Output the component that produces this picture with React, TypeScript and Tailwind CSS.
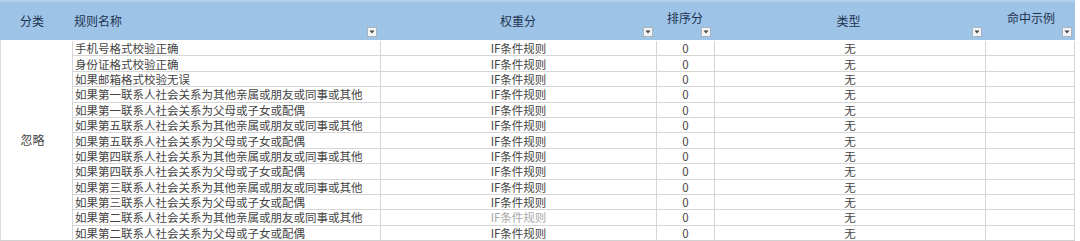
import React from "react";

const rows: { name: string; faded?: boolean }[] = [
  { name: "手机号格式校验正确" },
  { name: "身份证格式校验正确" },
  { name: "如果邮箱格式校验无误" },
  { name: "如果第一联系人社会关系为其他亲属或朋友或同事或其他" },
  { name: "如果第一联系人社会关系为父母或子女或配偶" },
  { name: "如果第五联系人社会关系为其他亲属或朋友或同事或其他" },
  { name: "如果第五联系人社会关系为父母或子女或配偶" },
  { name: "如果第四联系人社会关系为其他亲属或朋友或同事或其他" },
  { name: "如果第四联系人社会关系为父母或子女或配偶" },
  { name: "如果第三联系人社会关系为其他亲属或朋友或同事或其他" },
  { name: "如果第三联系人社会关系为父母或子女或配偶" },
  { name: "如果第二联系人社会关系为其他亲属或朋友或同事或其他", faded: true },
  { name: "如果第二联系人社会关系为父母或子女或配偶" },
];

function FilterBtn() {
  return (
    <div className="absolute right-[3px] bottom-[3px] w-[10px] h-[10px] border border-[#a9b4c2] bg-[#f4f4f4] flex items-center justify-center">
      <svg width="6" height="4" viewBox="0 0 6 4">
        <path d="M0.5 0.5 L5.5 0.5 L3 3.5 Z" fill="#444" />
      </svg>
    </div>
  );
}

export default function App() {
  return (
    <div
      className="w-[1080px] h-[241px] bg-white overflow-hidden text-[#444444]"
      style={{ fontFamily: '"Noto Sans CJK SC", "Noto Sans", sans-serif' }}
    >
      <div className="w-[1075px]">
        {/* header */}
        <div className="flex h-[40px] bg-[#9dc3e6] border-t-2 border-[#b3d1ec] text-[12px] text-[#1f3350]">
          <div className="w-[72px] flex items-center justify-center pr-[8px]">分类</div>
          <div className="relative w-[308px] flex items-center pl-[2px]">
            规则名称
            <FilterBtn />
          </div>
          <div className="relative w-[276px] flex items-center justify-center">
            权重分
            <FilterBtn />
          </div>
          <div className="relative w-[58px] flex items-center justify-center pb-[6px]">
            排序分
            <FilterBtn />
          </div>
          <div className="relative w-[271px] flex items-center justify-center pr-[2px]">
            类型
            <FilterBtn />
          </div>
          <div className="relative w-[90px] flex items-center justify-center pb-[6px] pl-[2px]">
            命中示例
            <FilterBtn />
          </div>
        </div>
        {/* body */}
        <div className="flex text-[11.5px] leading-[14px] border-b border-[#d0d0d0]">
          <div className="w-[72px] border-l border-[#dcdcdc] flex items-center justify-center pr-[8px] text-[12px]">
            忽略
          </div>
          <div className="flex flex-col">
            {rows.map((r, i) => (
              <div
                key={i}
                className={`flex h-[15.4px] border-t ${i === 0 ? "border-transparent" : "border-[#d6d6d6]"}`}
              >
                <div className="w-[308px] border-l border-[#d6d6d6] pl-[2px] flex items-center whitespace-nowrap">
                  {r.name}
                </div>
                <div
                  className={`w-[276px] border-l border-[#d6d6d6] flex items-center justify-center ${
                    r.faded ? "text-[#a8a8a8]" : ""
                  }`}
                >
                  IF条件规则
                </div>
                <div className="w-[58px] border-l border-[#d6d6d6] flex items-center justify-center">
                  0
                </div>
                <div className="w-[271px] border-l border-[#d6d6d6] flex items-center justify-center">
                  无
                </div>
                <div className="w-[90px] border-l border-r border-[#d6d6d6]"></div>
              </div>
            ))}
          </div>
        </div>
      </div>
    </div>
  );
}
